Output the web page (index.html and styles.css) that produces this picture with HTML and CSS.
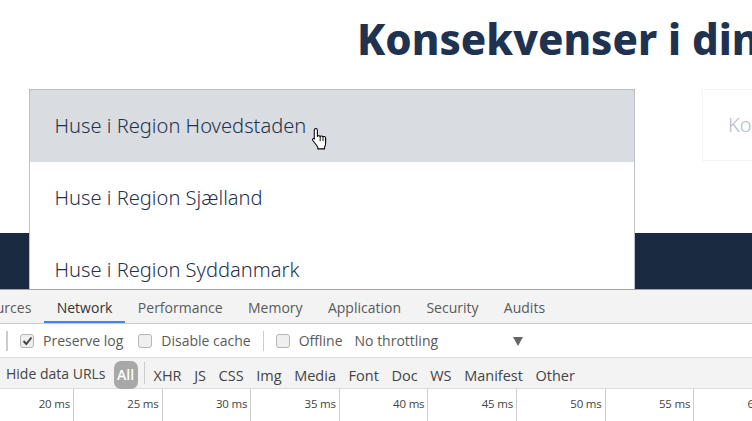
FILE: index.html
```html
<!DOCTYPE html>
<html lang="da">
<head>
<meta charset="utf-8">
<title>Konsekvenser i din</title>
<link rel="stylesheet" href="styles.css">
</head>
<body>
<main class="page">
  <section class="hero">
    <h1 class="title">Konsekvenser i din kommune</h1>
    <div class="pickers">
      <div class="picker-slot">
        <ul class="menu">
          <li class="menu-item is-hover">Huse i Region Hovedstaden</li>
          <li class="menu-item">Huse i Region Sjælland</li>
          <li class="menu-item">Huse i Region Syddanmark</li>
        </ul>
        <svg class="cursor" width="19" height="25" viewBox="0 0 18 24" aria-hidden="true">
          <path d="M4.500 1.500c.9 0 1.500.7 1.500 1.600v6c.1-.8 2.600-.9 2.700.2.200-1 2.600-.9 2.700.4.300-.9 2.500-.7 2.500.9v5.400c0 1.300-.4 2-1 3.200v1.800H6.400v-1.600c-.8-1.200-1.500-2.300-2.700-3.800L1.600 13c-.9-1.200.6-2.500 1.700-1.500L3 10.800V3.100c0-.9.600-1.600 1.500-1.600z" fill="#fff" stroke="#000" stroke-width="1" stroke-linejoin="round"/>
          <path d="M8.700 9.500v4M11.400 10v3.500M13.900 11v2.500" fill="none" stroke="#000" stroke-width=".9"/>
        </svg>
      </div>
      <div class="picker-box">Kommune</div>
    </div>
    <div class="band"></div>
  </section>
  <section class="devtools">
    <nav class="tabs">
      <span class="tab">Sources</span>
      <span class="tab is-active">Network</span>
      <span class="tab">Performance</span>
      <span class="tab">Memory</span>
      <span class="tab">Application</span>
      <span class="tab">Security</span>
      <span class="tab">Audits</span>
    </nav>
    <div class="toolbar">
      <span class="sep sep-first"></span>
      <label class="check check-a"><span class="box"><svg width="11" height="10" viewBox="0 0 11 10" aria-hidden="true"><path d="M1.500 5l2.800 3L9.500 1.500" fill="none" stroke="#444" stroke-width="2"/></svg></span>Preserve log</label>
      <label class="check check-b"><span class="box"></span>Disable cache</label>
      <span class="sep sep-mid"></span>
      <label class="check check-c"><span class="box"></span>Offline</label>
      <span class="throttle">No throttling<span class="arrow"></span></span>
    </div>
    <div class="filters">
      <span class="hide-urls">Hide data URLs</span>
      <span class="pill">All</span>
      <span class="sep sep-filter"></span>
      <span class="filter">XHR</span>
      <span class="filter">JS</span>
      <span class="filter">CSS</span>
      <span class="filter">Img</span>
      <span class="filter">Media</span>
      <span class="filter">Font</span>
      <span class="filter">Doc</span>
      <span class="filter">WS</span>
      <span class="filter">Manifest</span>
      <span class="filter">Other</span>
    </div>
    <div class="timeline">
      <span class="tick">20 ms</span>
      <span class="tick">25 ms</span>
      <span class="tick">30 ms</span>
      <span class="tick">35 ms</span>
      <span class="tick">40 ms</span>
      <span class="tick">45 ms</span>
      <span class="tick">50 ms</span>
      <span class="tick">55 ms</span>
      <span class="tick">60 ms</span>
    </div>
  </section>
</main>
</body>
</html>
```

FILE: styles.css
```css
* { box-sizing: border-box; }
html, body { margin: 0; height: 100%; overflow: hidden; background: #fff; }
.page { width: 752px; height: 421px; display: flex; flex-direction: column; overflow: hidden; }

.hero { height: 289px; display: flex; flex-direction: column; overflow: hidden; flex: none; }
.title {
  margin: 0; padding: 15px 0 0 357px; height: 89px; white-space: nowrap;
  font: 800 42px/48px "Noto Sans", "Liberation Sans", sans-serif; color: #1f324f;
}
.pickers { display: flex; padding-left: 29px; height: 144px; flex: none; }
.picker-slot { position: relative; width: 606px; flex: none; }
.menu {
  position: absolute; left: 0; top: 0; width: 606px; height: 300px; margin: 0; padding: 0;
  list-style: none; background: #fff; border: 1px solid #bcc0c6; border-bottom: 0; z-index: 2;
}
.menu-item {
  height: 72px; padding: 0 0 0 24.500px; display: flex; align-items: center;
  font: 300 20.100px/24px "Noto Sans", Lato, sans-serif; color: #1f324f;
}
.menu-item.is-hover { background: #d9dce1; }
.cursor { position: absolute; left: 282px; top: 38px; z-index: 3; }
.picker-box {
  margin: 0 0 0 67px; width: 100px; height: 72px; flex: none; border: 1px solid #f3f4f5;
  padding-left: 25px; display: flex; align-items: center;
  font: 300 20px/24px "Noto Sans", sans-serif; color: #b5bac4;
}
.band { flex: 1; background: #1a2a40; }

.devtools {
  flex: 1; display: flex; flex-direction: column; border-top: 1px solid #a3a3a3;
  font: 14px/18px "Open Sans", "Noto Sans", sans-serif; color: #5a5a5a; background: #fff;
  position: relative; z-index: 4;
}
.tabs { height: 34px; background: #f3f3f3; border-bottom: 1px solid #ccc; display: flex; align-items: stretch; flex: none; margin-left: -33px; padding-top: 2px; }
.tab { padding: 0 12.700px; display: flex; align-items: center; }
.tab.is-active { color: #333; box-shadow: inset 0 -2px 0 #3b86f5; }
.toolbar { height: 34px; border-bottom: 1px solid #ddd; display: flex; align-items: center; flex: none; padding-top: 1px; }
.sep { width: 1px; height: 20px; background: #ccc; flex: none; }
.sep-first { margin: 0 12px 0 6px; width: 2px; }
.sep-mid { margin-right: 12px; }
.check { display: flex; align-items: center; }
.check-a { margin-right: 15px; }
.check-b { margin-right: 12px; }
.check-c { margin-right: 12px; }
.box { width: 14px; height: 14px; border: 1px solid #b5b5b5; border-radius: 3px; background: #efefef; margin-right: 9px; display: flex; align-items: center; justify-content: center; }
.throttle { display: flex; align-items: center; position: relative; width: 170px; }
.arrow { position: absolute; left: 158px; top: 5px; width: 0; height: 0; border: 5.500px solid transparent; border-top: 9px solid #666; border-bottom: 0; }
.filters { height: 31px; background: #f3f3f3; border-bottom: 1px solid #ddd; display: flex; align-items: center; flex: none; padding-left: 6px; color: #444; }
.hide-urls { margin: 2px 8px 0 0; font-size: 14px; }
.pill { width: 24px; height: 28px; border-radius: 7px; background: #a8a8a8; color: #fff; font-weight: 600; display: flex; align-items: center; justify-content: center; margin: 3px 6px 0 0; }
.sep-filter { margin: 0 9px 0 0; height: 22px; }
.filter { margin: 6px 12.600px 0 0; font-size: 14.500px; }
.timeline { flex: 1; display: flex; }
.tick {
  width: 88.600px; flex: none; text-align: right; padding: 6px 3px 0 0; border-right: 1px solid #ccc;
  font-size: 11.500px; line-height: 18px; letter-spacing: -.2px; color: #444;
}
.tick:first-child { width: 74px; }
```
